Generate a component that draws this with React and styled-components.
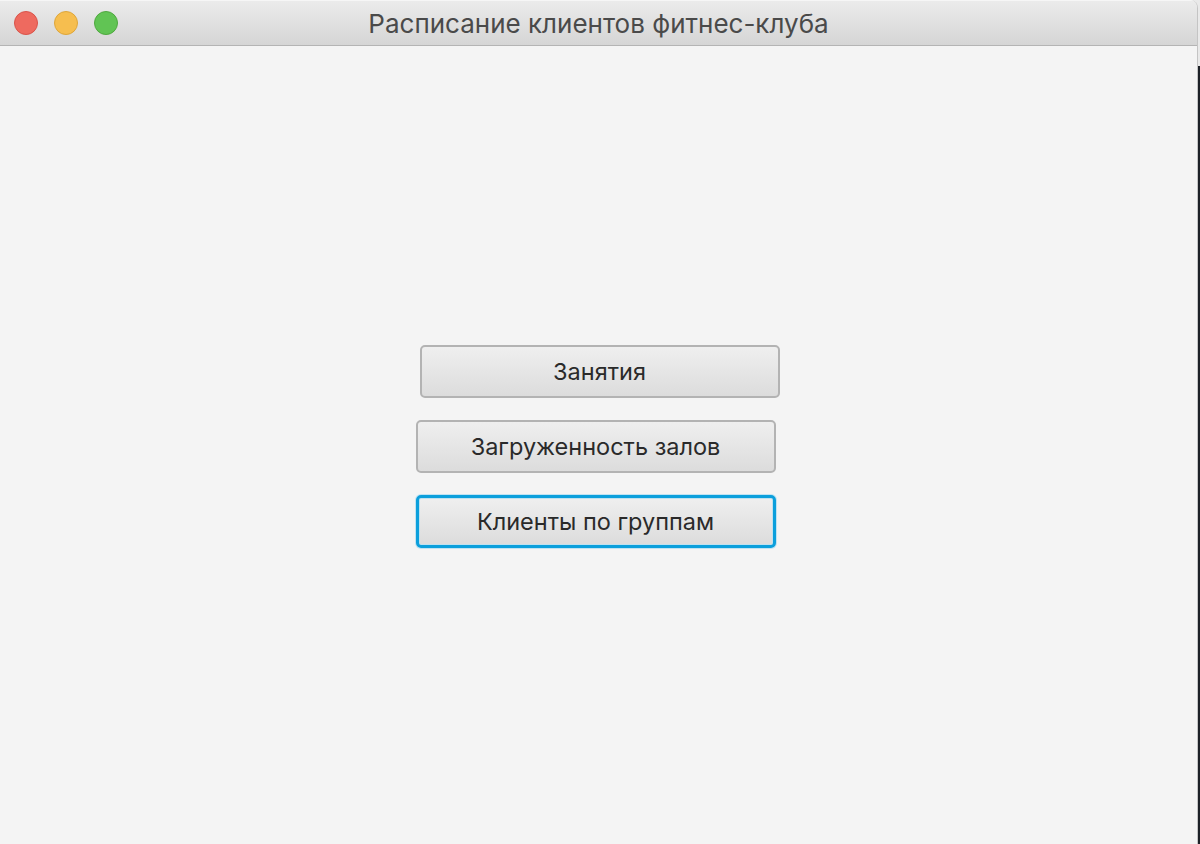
import React from 'react';
import styled, { createGlobalStyle } from 'styled-components';

const GlobalStyle = createGlobalStyle`
  html,
  body {
    background: #f4f4f4;
    height: 100%;
    margin: 0;
    overflow: hidden;
  }

  #root {
    height: 100%;
  }
`;

const Desktop = styled.div`
  background: linear-gradient(to bottom, #e9e9e9 0, #e9e9e9 66px, #1d2127 66px);
  display: flex;
  height: 844px;
  width: 1200px;
`;

const Window = styled.div`
  background: #f4f4f4;
  border-right: 1px solid #c4c4c4;
  border-top-right-radius: 8px;
  display: flex;
  flex-direction: column;
  height: 100%;
  overflow: hidden;
  width: 1197px;
`;

const TitleBar = styled.div`
  align-items: center;
  background: linear-gradient(to bottom, #ebebeb, #d5d5d5);
  border-bottom: 1px solid #b4b4b4;
  border-top: 1px solid #f6f6f6;
  box-sizing: border-box;
  display: flex;
  flex: 0 0 46px;
  position: relative;
`;

const Lights = styled.div`
  display: flex;
  gap: 16px;
  left: 14px;
  position: absolute;
  top: 10px;
`;

const Light = styled.span`
  background: ${({ $color }) => $color};
  border: 1px solid ${({ $edge }) => $edge};
  border-radius: 50%;
  box-sizing: border-box;
  height: 24px;
  width: 24px;
`;

const Title = styled.div`
  color: #4a4a4a;
  flex: 1;
  font-family: 'Inter', 'Noto Sans', sans-serif;
  font-size: 26px;
  text-align: center;
`;

const Content = styled.div`
  align-items: center;
  display: flex;
  flex: 1;
  flex-direction: column;
  gap: 22px;
  padding-right: 6px;
  padding-top: 299px;
`;

const MenuButton = styled.button`
  background: linear-gradient(to bottom, #efefef, #dcdcdc);
  border: ${({ $focused }) => ($focused ? '3px solid #0b9fdc' : '2px solid #b3b3b3')};
  border-radius: 5px;
  box-shadow: ${({ $focused }) => ($focused ? '0 0 0 1px #bfe3f3, inset 0 0 0 1px #bfe1ef' : 'none')};
  color: #2a2a2a;
  font-family: 'Inter', 'Noto Sans', sans-serif;
  font-size: 23.5px;
  height: 53px;
  margin-left: ${({ $shift }) => $shift || 0}px;
  padding: 0;
  width: 360px;
`;

const App = () => (
  <>
    <GlobalStyle />
    <Desktop>
      <Window>
        <TitleBar>
          <Lights>
            <Light $color="#ee6a5f" $edge="#d9544a" />
            <Light $color="#f6be4f" $edge="#dea63a" />
            <Light $color="#61c454" $edge="#4fa83f" />
          </Lights>
          <Title>Расписание клиентов фитнес-клуба</Title>
        </TitleBar>

        <Content>
          <MenuButton $shift={8}>Занятия</MenuButton>
          <MenuButton>Загруженность залов</MenuButton>
          <MenuButton $focused>Клиенты по группам</MenuButton>
        </Content>
      </Window>
    </Desktop>
  </>
);

export default App;
